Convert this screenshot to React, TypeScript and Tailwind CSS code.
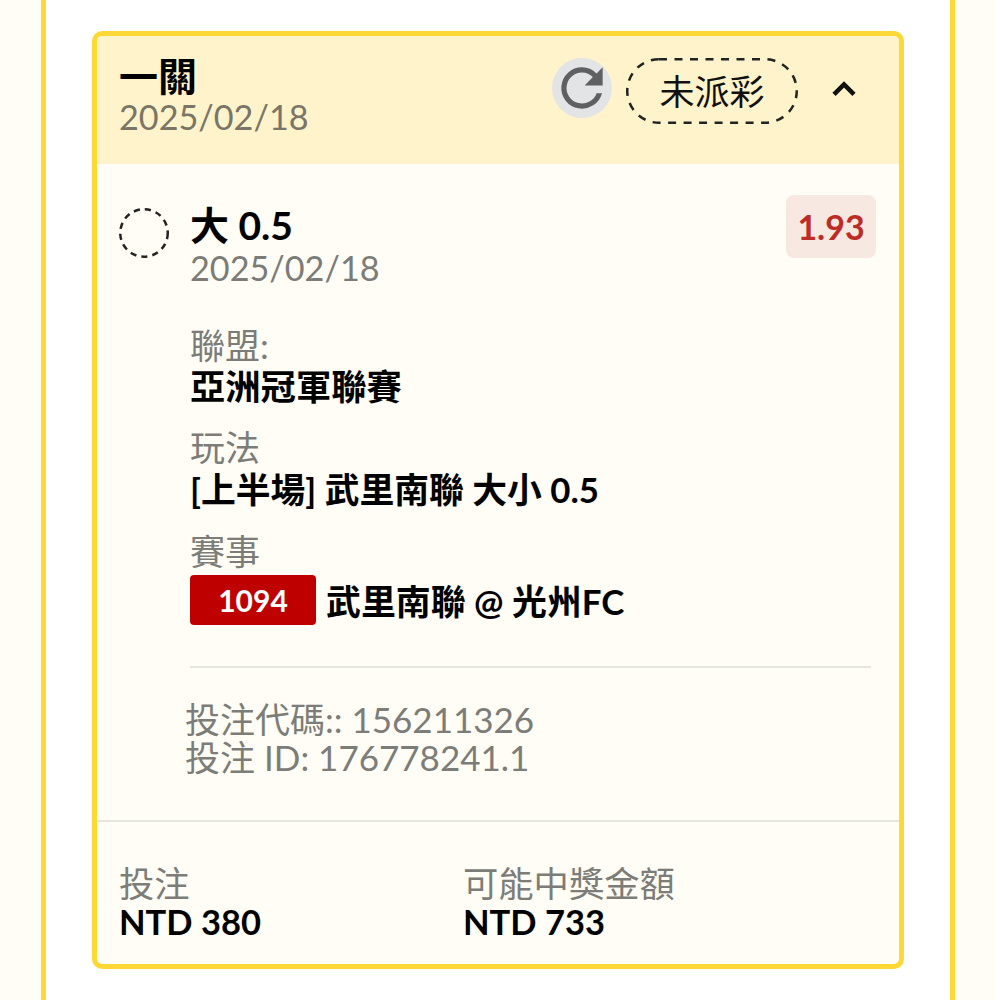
import React from "react";

const font = { fontFamily: '"Lato","Noto Sans CJK TC",sans-serif' };

function Field({ label, valueClass, children }: { label: string; valueClass?: string; children: React.ReactNode }) {
  return (
    <div className="flex flex-col">
      <div className="text-[35px] leading-[38px] text-[#7c7c78]">{label}</div>
      <div className={valueClass}>{children}</div>
    </div>
  );
}

export default function App() {
  return (
    <div style={font} className="h-[1000px] w-[995px] overflow-hidden bg-[#fffdf5] pl-[41px] pr-[40px]">
      <div className="h-full border-x-[5px] border-[#ffd835] bg-white pl-[46px] pr-[46px] pt-[31px]">
        <div className="h-[938px] overflow-hidden rounded-[10px] border-[5px] border-[#ffd835] bg-[#fffdf5]">
          <div className="flex h-[128px] items-start justify-between bg-[#fff3cb] pl-[22px] pr-[39px]">
            <div className="pt-[17px]">
              <div className="text-[39px] font-bold leading-[46px] text-black">一關</div>
              <div className="mt-[-1px] text-[34.2px] leading-[38px] text-[#7a7566]">2025/02/18</div>
            </div>
            <div className="flex items-center pt-[22px]">
              <div className="mt-[-6px] flex h-[60px] w-[60px] items-center justify-center rounded-full bg-[#e2e4e6]">
                <svg viewBox="0 0 24 24" className="h-[62px] w-[62px] shrink-0" fill="#5f6062">
                  <path d="M17.65 6.35A7.95 7.95 0 0 0 12 4a8 8 0 1 0 7.74 10h-2.08A6 6 0 1 1 12 6c1.66 0 3.14.69 4.22 1.78L13 11h7V4l-2.35 2.35z" />
                </svg>
              </div>
              <div className="relative ml-[14px] flex h-[66px] w-[172px] items-center justify-center text-[35px] text-[#111]">
                <svg viewBox="0 0 172 66" className="absolute inset-0 h-[66px] w-[172px]" fill="none" stroke="#222" strokeWidth="2.5" strokeDasharray="8 7.5">
                  <rect x="1.25" y="1.25" width="169.5" height="63.5" rx="31.75" />
                </svg>
                未派彩
              </div>
              <svg viewBox="0 0 24 24" className="ml-[30px] mt-[-4px] h-[32px] w-[32px]" fill="none" stroke="#111" strokeWidth="3.4">
                <path d="M4.5 16l7.5-7.5 7.5 7.5" />
              </svg>
            </div>
          </div>

          <div className="flex flex-col pl-[22px] pr-[23px] pt-[31px]">
            <div className="flex items-start justify-between">
              <div className="flex">
                <svg viewBox="0 0 50 50" className="mt-[13px] h-[50px] w-[50px]" fill="none" stroke="#222" strokeWidth="2.5" strokeDasharray="6.2 5">
                  <circle cx="25" cy="25" r="23.75" />
                </svg>
                <div className="ml-[21px] pt-[7px]">
                  <div className="text-[39px] font-bold leading-[46px] text-black">大 0.5</div>
                  <div className="mt-[1px] text-[34.2px] leading-[38px] text-[#7b7b78]">2025/02/18</div>
                </div>
              </div>
              <div className="flex h-[63px] w-[90px] items-center justify-center rounded-[8px] bg-[#f7e8e2] text-[34px] font-bold text-[#bd2c26]">
                1.93
              </div>
            </div>

            <div className="ml-[71px] mr-[5px] mt-[39px] flex flex-col gap-[18px] border-b-2 border-[#e6e5e0] pb-[41px]">
              <Field label="聯盟:" valueClass="text-[35.3px] font-bold leading-[46px] text-black">亞洲冠軍聯賽</Field>
              <Field label="玩法" valueClass="text-[34.8px] font-bold leading-[48px] text-black">[上半場] 武里南聯 大小 0.5</Field>
              <Field label="賽事" valueClass="mt-[5px] flex h-[50px] items-center">
                <div className="flex h-[50px] w-[126px] items-center justify-center rounded-[4px] bg-[#bf0000] text-[30px] font-bold text-white">
                  1094
                </div>
                <div className="ml-[10px] pt-[2px] text-[34.9px] font-bold leading-[47px] text-black">武里南聯 @ 光州FC</div>
              </Field>
            </div>

            <div className="ml-[66px] mt-[32px] text-[35px] leading-[38px] text-[#7c7c78]">
              <div>投注代碼:: 156211326</div>
              <div>投注 ID: 176778241.1</div>
            </div>
          </div>

          <div className="mt-[44px] flex border-t-2 border-[#e6e5e0] pl-[22px] pt-[42px]">
            <div className="w-[344px]">
              <div className="text-[35.3px] leading-[40px] text-[#7c7c78]">投注</div>
              <div className="text-[34.5px] font-bold leading-[36px] text-black">NTD 380</div>
            </div>
            <div>
              <div className="text-[35.3px] leading-[40px] text-[#7c7c78]">可能中獎金額</div>
              <div className="text-[34.5px] font-bold leading-[36px] text-black">NTD 733</div>
            </div>
          </div>
        </div>
      </div>
    </div>
  );
}
